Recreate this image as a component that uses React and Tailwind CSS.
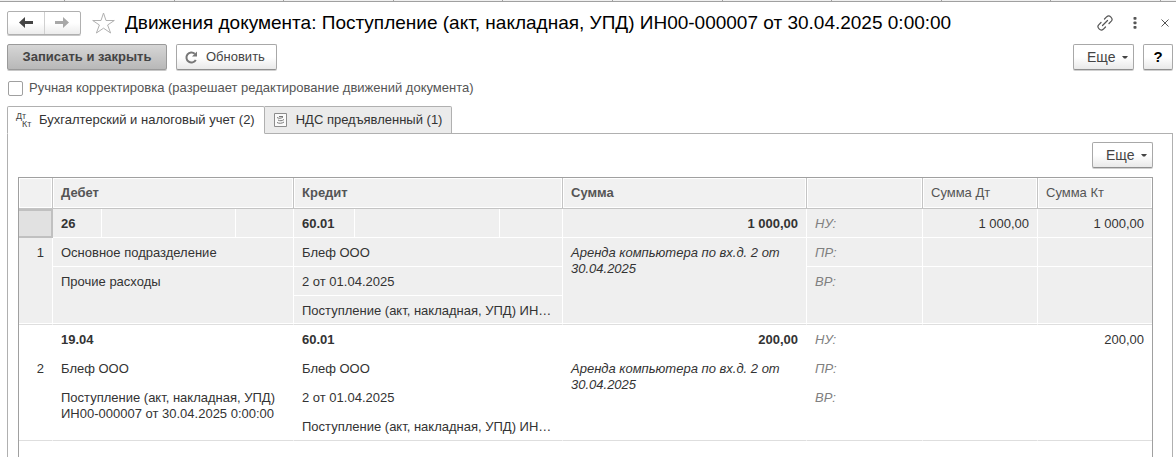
import React from 'react';

const btn =
  'flex h-[26px] items-center rounded-[2px] border border-[#a8a8a8] border-b-[#8f8f8f] bg-linear-to-b from-white from-50% to-[#e9e9e9] text-[#444] shadow-[0_1px_0_#d0d0d0]';

function MoreButton() {
  return (
    <button type="button" className={`${btn} w-[61px] gap-[6px] pl-[13px] text-sm`}>
      Еще
      <svg width="6" height="3" viewBox="0 0 6 3" fill="#444" aria-hidden="true">
        <path d="M0 0h6L4 2.500H2z" />
      </svg>
    </button>
  );
}

const ticks = [1, 2, 3, 4, 5, 6, 7, 8, 9, 10];

const entries = [
  {
    n: 1,
    selected: true,
    debit: ['26', 'Основное подразделение', 'Прочие расходы'],
    credit: ['60.01', 'Блеф ООО', '2 от 01.04.2025', 'Поступление (акт, накладная, УПД) ИН…'],
    sum: '1 000,00',
    note: 'Аренда компьютера по вх.д. 2 от 30.04.2025',
    dt: '1 000,00',
    kt: '1 000,00',
  },
  {
    n: 2,
    selected: false,
    debit: ['19.04', 'Блеф ООО', 'Поступление (акт, накладная, УПД) ИН00-000007 от 30.04.2025 0:00:00'],
    credit: ['60.01', 'Блеф ООО', '2 от 01.04.2025', 'Поступление (акт, накладная, УПД) ИН…'],
    sum: '200,00',
    note: 'Аренда компьютера по вх.д. 2 от 30.04.2025',
    dt: '',
    kt: '200,00',
  },
];

const cell = 'border-r border-b border-white px-2 pt-[7px] align-top leading-4';
const last = 'border-r border-r-white border-b border-b-[#dedede] px-2 pt-[7px] align-top leading-4 shadow-[inset_0_-1px_0_#fff]';
const tag = 'italic text-[#808080]';

function Entry({ e }) {
  return (
    <tbody className={e.selected ? 'bg-[#efefef]' : 'bg-white'}>
      <tr className="h-[29px]">
        <td className={e.selected ? 'border-2 border-l-0 border-[#c0c0c0] bg-[#e1e1e1]' : cell}></td>
        <td className={`${cell} font-bold`}>{e.debit[0]}</td>
        <td className={cell}></td>
        <td className={cell}></td>
        <td className={`${cell} font-bold`}>{e.credit[0]}</td>
        <td className={cell}></td>
        <td className={cell}></td>
        <td className={`${cell} text-right font-bold`}>{e.sum}</td>
        <td className={`${cell} ${tag}`}>НУ:</td>
        <td className={`${cell} text-right`}>{e.dt}</td>
        <td className={`${cell} border-r-0 text-right`}>{e.kt}</td>
      </tr>
      <tr className="h-[29px]">
        <td rowSpan={3} className={`${last} text-right`}>{e.n}</td>
        <td colSpan={3} className={cell}>{e.debit[1]}</td>
        <td colSpan={3} className={cell}>{e.credit[1]}</td>
        <td rowSpan={3} className={`${last} italic`}>{e.note}</td>
        <td className={`${cell} ${tag}`}>ПР:</td>
        <td className={cell}></td>
        <td className={`${cell} border-r-0`}></td>
      </tr>
      <tr className="h-[29px]">
        <td rowSpan={2} colSpan={3} className={last}>{e.debit[2]}</td>
        <td colSpan={3} className={cell}>{e.credit[2]}</td>
        <td rowSpan={2} className={`${last} ${tag}`}>ВР:</td>
        <td rowSpan={2} className={last}></td>
        <td rowSpan={2} className={`${last} border-r-0`}></td>
      </tr>
      <tr className="h-[29px]">
        <td colSpan={3} className={`${last} whitespace-nowrap`}>{e.credit[3]}</td>
      </tr>
    </tbody>
  );
}

const head =
  'border-r border-b border-[#c4c4c4] bg-[#f1f1f1] px-2 text-left text-[#555] shadow-[inset_0_0_0_1px_#fff]';

export default function App() {
  return (
    <div className="flex min-h-screen flex-col bg-white font-['Liberation_Sans',Arial,sans-serif] text-[13px] leading-4 text-[#333]">
      <div className="flex h-[2px] border-b border-[#a0a0a0] bg-[#f0f0f0] pr-[15px]">
        <span className="w-[65px] border-r border-[#a0a0a0]"></span>
        {ticks.map((t) => (
          <span key={t} className="flex-1 border-r border-[#a0a0a0]"></span>
        ))}
      </div>
      <header className="flex h-[42px] items-center pr-[7px] pb-px pl-[7px]">
        <div className="flex h-6 w-[74px] rounded-[2px] border border-[#b0b0b0] bg-linear-to-b from-white from-50% to-[#ececec] shadow-[0_1px_0_#c8c8c8]">
          <button type="button" aria-label="Назад" className="flex flex-1 items-center justify-center border-r border-[#d0d0d0]">
            <svg width="14" height="11" viewBox="0 0 14 11" fill="#444" aria-hidden="true">
              <path d="M0 5.500L6 0V4H14V7H6V11z" />
            </svg>
          </button>
          <button type="button" aria-label="Вперед" className="flex flex-1 items-center justify-center">
            <svg width="14" height="11" viewBox="0 0 14 11" fill="#a8a8a8" aria-hidden="true">
              <path d="M14 5.500L8 0V4H0V7H8V11z" />
            </svg>
          </button>
        </div>
        <button type="button" aria-label="Добавить в избранное" className="ml-[11px]">
          <svg width="23" height="22" viewBox="0 0 23 22" fill="none" stroke="#b0b0b0" aria-hidden="true">
            <path d="M11.500 1L14 8.500H22.300L15.600 13L18.600 21L11.500 16.200L4.400 21L7.400 13L.7 8.500H9z" />
          </svg>
        </button>
        <h1 className="ml-[10px] flex-1 truncate text-[19px] leading-6 text-black">
          Движения документа: Поступление (акт, накладная, УПД) ИН00-000007 от 30.04.2025 0:00:00
        </h1>
        <div className="flex items-center">
          <button type="button" aria-label="Получить ссылку">
            <svg width="16" height="16" viewBox="0 0 16 16" fill="none" stroke="#555" strokeWidth="1.200" strokeLinecap="round" aria-hidden="true">
              <path d="M5.500 10.500L10.500 5.500M7.500 4L9.800 1.700C12.400-.7 16.700 3.600 14.300 6.200L12 8.500M8.500 12L6.200 14.300C3.600 16.700-.7 12.400 1.700 9.800L4 7.500" />
            </svg>
          </button>
          <button type="button" aria-label="Меню" className="ml-5">
            <svg width="4" height="12" viewBox="0 0 4 12" fill="#555" aria-hidden="true">
              <rect x=".5" y="0" width="3" height="2.700" rx=".8" />
              <rect x=".5" y="4.500" width="3" height="2.700" rx=".8" />
              <rect x=".5" y="9" width="3" height="2.700" rx=".8" />
            </svg>
          </button>
          <button type="button" aria-label="Закрыть" className="ml-6">
            <svg width="8" height="8" viewBox="0 0 8 8" stroke="#555" aria-hidden="true">
              <path d="M.5 .5l7 7M7.500 .5l-7 7" />
            </svg>
          </button>
        </div>
      </header>
      <div className="flex gap-[9px] pr-[3px] pl-[7px]">
        <button type="button" className="h-[26px] w-40 rounded-[2px] border border-[#9a9a9a] bg-linear-to-b from-[#d6d6d6] to-[#b8b8b8] font-bold text-[#444] shadow-[0_1px_0_#c8c8c8]">
          Записать и закрыть
        </button>
        <button type="button" className={`${btn} w-[101px] gap-2 pl-2`}>
          <svg width="13" height="13" viewBox="0 0 13 13" fill="none" aria-hidden="true">
            <path d="M10.800 9A5 5 0 1 1 9.800 2.800" stroke="#777" strokeWidth="2" />
            <path d="M12 .5V5.500H7z" fill="#777" />
          </svg>
          Обновить
        </button>
        <div className="flex-1"></div>
        <MoreButton />
        <button type="button" className={`${btn} w-[30px] justify-center text-[15px] font-bold text-black`}>?</button>
      </div>
      <label className="mt-[10px] flex h-4 items-center gap-[6px] pl-2 text-[#555]">
        <input type="checkbox" className="size-[15px] appearance-none rounded-[2px] border border-[#a0a0a0] bg-white" />
        Ручная корректировка (разрешает редактирование движений документа)
      </label>
      <div role="tablist" className="relative z-10 mt-[10px] flex h-7 pl-[7px]">
        <button type="button" role="tab" aria-selected="true" className="flex items-center gap-[5px] rounded-t-[2px] border border-[#b0b0b0] border-b-white bg-white pr-[9px] pl-2">
          <svg width="18" height="18" viewBox="0 0 18 18" className="overflow-visible" fill="#444" fontFamily="Liberation Sans" fontSize="9" aria-hidden="true">
            <text x="0" y="8">Дт</text>
            <text x="6" y="16">Кт</text>
          </svg>
          Бухгалтерский и налоговый учет (2)
        </button>
        <button type="button" role="tab" aria-selected="false" className="flex items-center gap-[9px] rounded-tr-[2px] border border-l-0 border-[#b0b0b0] bg-[#ebebeb] pr-[9px] pl-[9px]">
          <svg width="13" height="14" viewBox="0 0 13 14" fill="none" aria-hidden="true">
            <path d="M.5 .5h12v13H.5z" fill="#fafafa" stroke="#8c8c8c" />
            <path d="M3 4.500c2 1.200 4 1 6-.5M4 7c2 1.200 4 1 6-.5M3 9.500c2 1.200 5 1 7-.5M5 3.500h4" stroke="#777" />
          </svg>
          НДС предъявленный (1)
        </button>
      </div>
      <main className="-mt-px mr-[3px] ml-[7px] flex flex-1 flex-col border border-b-0 border-[#b0b0b0] pr-[19px] pl-[10px]">
        <div className="flex justify-end pt-2 pb-[9px]">
          <MoreButton />
        </div>
        <div className="flex-1 border border-b-0 border-[#a0a0a0]">
          <table className="w-full table-fixed border-separate border-spacing-0">
            <colgroup>
              <col className="w-[34px]" />
              <col className="w-[49px]" />
              <col className="w-[134px]" />
              <col className="w-[58px]" />
              <col className="w-[61px]" />
              <col className="w-[145px]" />
              <col className="w-[63px]" />
              <col className="w-[244px]" />
              <col className="w-[116px]" />
              <col className="w-[115px]" />
              <col className="w-[114px]" />
            </colgroup>
            <thead>
              <tr className="h-[31px]">
                <th className={head}></th>
                <th colSpan={3} className={`${head} font-bold`}>Дебет</th>
                <th colSpan={3} className={`${head} font-bold`}>Кредит</th>
                <th className={`${head} font-bold`}>Сумма</th>
                <th className={head}></th>
                <th className={`${head} font-normal`}>Сумма Дт</th>
                <th className={`${head} border-r-0 font-normal`}>Сумма Кт</th>
              </tr>
            </thead>
            {entries.map((e) => (
              <Entry key={e.n} e={e} />
            ))}
          </table>
        </div>
      </main>
    </div>
  );
}
